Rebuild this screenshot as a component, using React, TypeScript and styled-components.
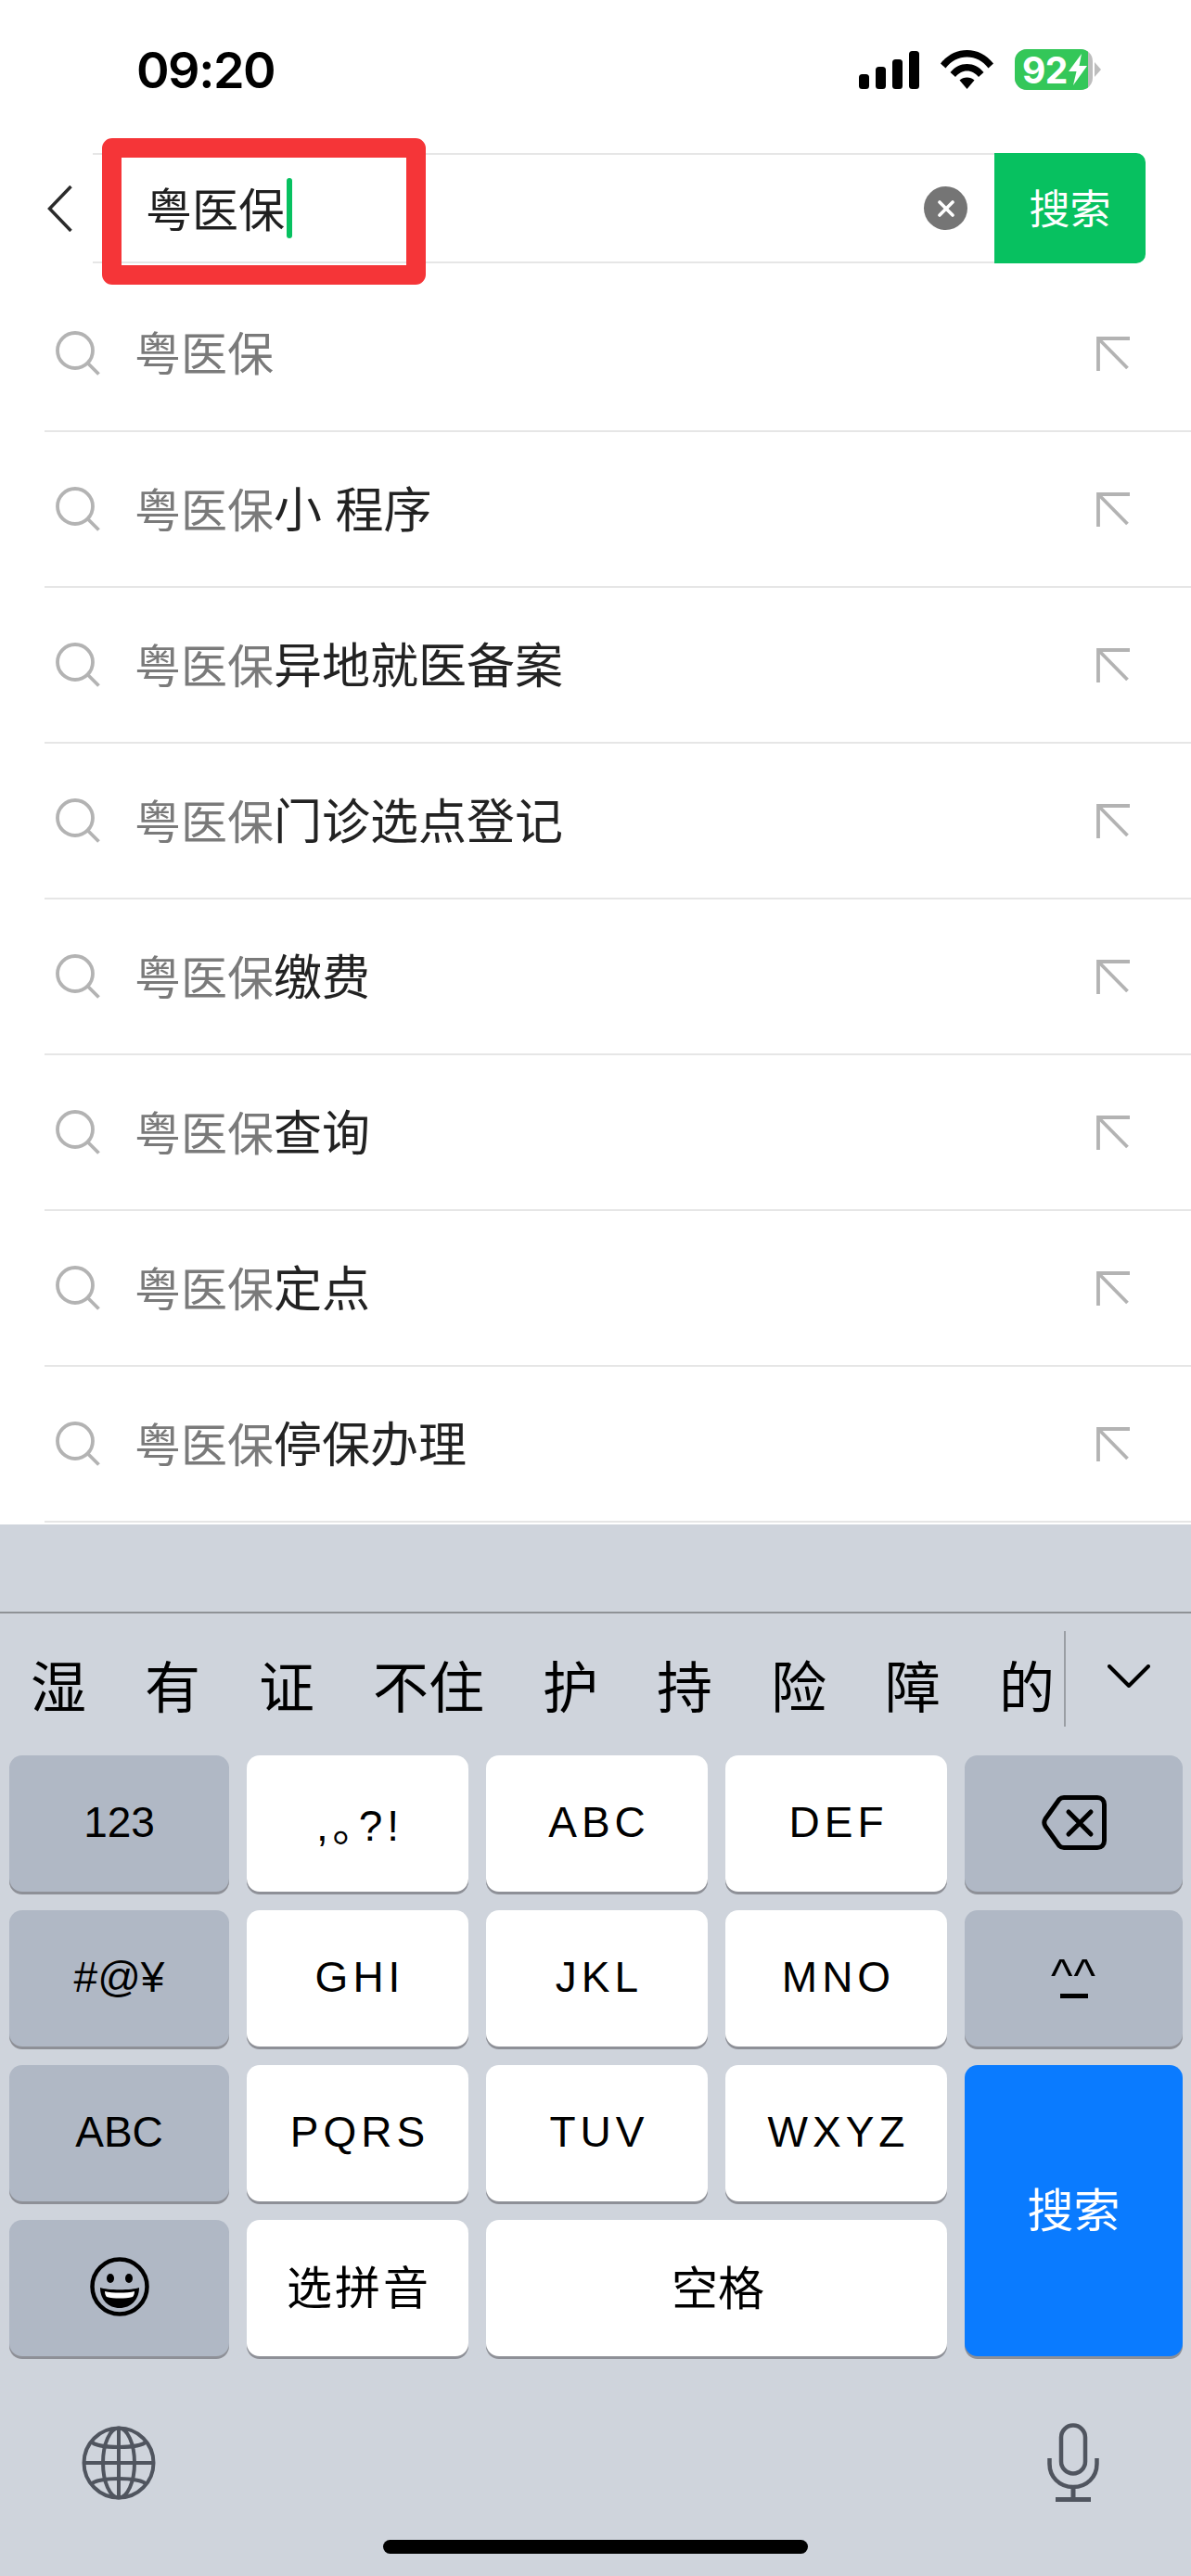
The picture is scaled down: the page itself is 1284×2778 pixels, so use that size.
import React from "react";
import styled, { createGlobalStyle } from "styled-components";

const GlobalStyle = createGlobalStyle`
  html, body {
    margin: 0;
    padding: 0;
    background: #fff;
  }
  body {
    font-family: "Liberation Sans", "Noto Sans CJK SC", sans-serif;
  }
  * {
    box-sizing: border-box;
  }
`;

const HIGHLIGHT = "粤医保";
const suggestions = ["", "小 程序", "异地就医备案", "门诊选点登记", "缴费", "查询", "定点", "停保办理"];
const candidates = ["湿", "有", "证", "不住", "护", "持", "险", "障", "的"];

function SignalIcon() {
  return (
    <svg width="65" height="41" viewBox="0 0 65 41">
      <rect x="0" y="25" width="11" height="16" rx="3.5" fill="#000" />
      <rect x="18" y="17" width="11" height="24" rx="3.5" fill="#000" />
      <rect x="36" y="9" width="11" height="32" rx="3.5" fill="#000" />
      <rect x="54" y="0" width="11" height="41" rx="3.5" fill="#000" />
    </svg>
  );
}

function WifiIcon() {
  return (
    <svg width="57" height="42" viewBox="0 0 57 42" fill="#000">
      <path d="M0 14.5C7.5 5 17.5 0 28.5 0S49.500 5 57 14.500L51.500 19.500C45.500 11.500 37.500 7.500 28.500 7.500S11.500 11.500 5.500 19.500Z" />
      <path d="M10.500 24C15.500 18 21.500 15 28.500 15S41.500 18 46.500 24L41 29C37.500 25 33.500 22.500 28.500 22.500S19.500 25 16 29Z" />
      <path d="M20.500 32.500C22.500 30.500 25.500 29.500 28.500 29.500S34.500 30.500 36.500 32.500L28.500 42Z" />
    </svg>
  );
}

function BoltIcon() {
  return (
    <svg width="22" height="34" viewBox="0 0 22 34" fill="#fff">
      <path d="M15 0L1 19H9.500L6 34L21 13H12.500Z" />
    </svg>
  );
}

function BackIcon() {
  return (
    <svg width="27" height="50" viewBox="0 0 27 50" fill="none" stroke="#2b2b2b" strokeWidth="3.500">
      <path d="M25.500 1L2.500 25L25.500 49" />
    </svg>
  );
}

function ClearIcon() {
  return (
    <svg width="18" height="18" viewBox="0 0 18 18" fill="none" stroke="#fff" strokeWidth="3.600" strokeLinecap="round">
      <path d="M2 2L16 16M16 2L2 16" />
    </svg>
  );
}

function SearchIcon() {
  return (
    <svg width="48" height="48" viewBox="0 0 48 48" fill="none" stroke="#b3b3b3" strokeWidth="3.800">
      <circle cx="21" cy="21" r="19" />
      <path d="M34.500 34.500L46.500 46.500" />
    </svg>
  );
}

function FillIcon() {
  return (
    <svg width="36" height="37" viewBox="0 0 36 37" fill="none" stroke="#b3b3b3" strokeWidth="3.800">
      <path d="M2 37V2H36" />
      <path d="M3 3L33.500 34" />
    </svg>
  );
}

function ChevronDownIcon() {
  return (
    <svg width="46" height="25" viewBox="0 0 46 25" fill="none" stroke="#000" strokeWidth="4" strokeLinecap="round" strokeLinejoin="round">
      <path d="M2 2L23 23L44 2" />
    </svg>
  );
}

function BackspaceIcon() {
  return (
    <svg width="70" height="59" viewBox="0 0 70 59" fill="none" stroke="#000" strokeWidth="5" strokeLinecap="round" strokeLinejoin="round">
      <path d="M24 2.500H60C64.500 2.500 67.500 5.500 67.500 10V49C67.500 53.500 64.500 56.500 60 56.500H24C22 56.500 20.500 56 19 54.500L4 33.500C2.500 31 2.500 28 4 25.500L19 4.500C20.500 3 22 2.500 24 2.500Z" />
      <path d="M29 18L53 42M53 18L29 42" />
    </svg>
  );
}

function EmojiIcon() {
  return (
    <svg width="64" height="64" viewBox="0 0 64 64">
      <circle cx="32" cy="32" r="29.500" fill="none" stroke="#000" strokeWidth="4.500" />
      <ellipse cx="22" cy="23" rx="4" ry="5" fill="#000" />
      <ellipse cx="42" cy="23" rx="4" ry="5" fill="#000" />
      <path d="M11 33C18 36 46 36 53 33C53 46 44 55 32 55S11 46 11 33Z" fill="#000" />
      <path d="M16 37C24 39 40 39 48 37C48 40 47 42 46 43C38 45 26 45 18 43C17 42 16 40 16 37Z" fill="#fff" />
    </svg>
  );
}

function GlobeIcon() {
  return (
    <svg width="80" height="80" viewBox="0 0 80 80" fill="none" stroke="#50555f" strokeWidth="4">
      <circle cx="40" cy="40" r="37.500" />
      <ellipse cx="40" cy="40" rx="17" ry="37.500" />
      <path d="M40 2.500V77.500M2.500 40H77.500" />
      <path d="M10 17C18 25 62 25 70 17M10 63C18 55 62 55 70 63" />
    </svg>
  );
}

function MicIcon() {
  return (
    <svg width="56" height="85" viewBox="0 0 56 85" fill="none" stroke="#50555f" strokeWidth="4.500">
      <rect x="15" y="2.500" width="26" height="52" rx="13" />
      <path d="M2.500 38V44C2.500 58 13 69 28 69S53.500 58 53.500 44V38" />
      <path d="M28 69V82M9 82.500H47" strokeWidth="5" />
    </svg>
  );
}

export default function App() {
  return (
    <Page>
      <GlobalStyle />
      <StatusBar>
        <Clock>09:20</Clock>
        <StatusIcons>
          <SignalIcon />
          <WifiIcon />
          <Battery>
            <BatteryBody>
              <BatteryFill style={{ width: "94%" }} />
              <BatteryLabel>92</BatteryLabel>
              <BatteryBolt>
                <BoltIcon />
              </BatteryBolt>
            </BatteryBody>
            <BatteryCap />
          </Battery>
        </StatusIcons>
      </StatusBar>

      <SearchBar>
        <BackButton>
          <BackIcon />
        </BackButton>
        <SearchField>
          <QueryText>{HIGHLIGHT}</QueryText>
          <Caret />
          <ClearButton>
            <ClearIcon />
          </ClearButton>
          <RedMark />
        </SearchField>
        <SearchButton>
          <span>搜索</span>
        </SearchButton>
      </SearchBar>

      <SuggestionList>
        {suggestions.map((rest) => (
          <SuggestionRow key={rest}>
            <SearchIcon />
            <SuggestionText>
              <Highlight>{HIGHLIGHT}</Highlight>
              {rest}
            </SuggestionText>
            <FillIcon />
          </SuggestionRow>
        ))}
      </SuggestionList>

      <Keyboard>
        <Composition />
        <CandidateBar>
          <CandidateList>
            {candidates.map((c) => (
              <span key={c}>{c}</span>
            ))}
          </CandidateList>
          <MoreButton>
            <ChevronDownIcon />
          </MoreButton>
        </CandidateBar>

        <KeyGrid>
          <Key $tone="dark">123</Key>
          <Key $spaced>,｡?!</Key>
          <Key $spaced>ABC</Key>
          <Key $spaced>DEF</Key>
          <Key $tone="dark">
            <BackspaceIcon />
          </Key>

          <Key $tone="dark">#@¥</Key>
          <Key $spaced>GHI</Key>
          <Key $spaced>JKL</Key>
          <Key $spaced>MNO</Key>
          <Key $tone="dark">
            <Kaomoji>
              <KaomojiEyes>^^</KaomojiEyes>
              <KaomojiMouth />
            </Kaomoji>
          </Key>

          <Key $tone="dark">ABC</Key>
          <Key $spaced>PQRS</Key>
          <Key $spaced>TUV</Key>
          <Key $spaced>WXYZ</Key>
          <EnterKey>搜索</EnterKey>

          <Key $tone="dark">
            <EmojiIcon />
          </Key>
          <CjkKey>选拼音</CjkKey>
          <SpaceKey>空格</SpaceKey>
        </KeyGrid>

        <ToolRow>
          <GlobeIcon />
          <MicIcon />
        </ToolRow>
        <HomeBar />
      </Keyboard>
    </Page>
  );
}

const Page = styled.div`
  width: 1284px;
  height: 2778px;
  display: flex;
  flex-direction: column;
  overflow: hidden;
  background: #fff;
`;

const StatusBar = styled.div`
  height: 150px;
  margin-bottom: 15px;
  padding: 0 97px 0 147px;
  display: flex;
  align-items: center;
  justify-content: space-between;
`;

const Clock = styled.span`
  font-family: Inter, sans-serif;
  font-size: 54px;
  font-weight: 600;
  letter-spacing: -1.5px;
  color: #000;
`;

const StatusIcons = styled.div`
  display: flex;
  align-items: center;
  gap: 23px;
`;

const Battery = styled.div`
  display: flex;
  align-items: center;
  gap: 2px;
`;

const BatteryBody = styled.div`
  position: relative;
  width: 84px;
  height: 44px;
  border-radius: 13px;
  overflow: hidden;
  background: #bdbdbd;
  display: flex;
  align-items: center;
  padding-left: 8px;
`;

const BatteryFill = styled.div`
  position: absolute;
  left: 0;
  top: 0;
  bottom: 0;
  background: #34c759;
`;

const BatteryLabel = styled.span`
  position: relative;
  font-family: Inter, sans-serif;
  font-size: 39px;
  font-weight: 700;
  letter-spacing: -0.5px;
  color: #fff;
`;

const BatteryBolt = styled.span`
  position: relative;
  display: flex;
  flex-shrink: 0;
`;

const BatteryCap = styled.div`
  width: 0;
  height: 0;
  border-top: 8px solid transparent;
  border-bottom: 8px solid transparent;
  border-left: 7px solid #bdbdbd;
`;

const SearchBar = styled.div`
  height: 119px;
  margin-bottom: 14px;
  padding: 0 49px 0 51px;
  display: flex;
  align-items: stretch;
`;

const BackButton = styled.div`
  width: 49px;
  display: flex;
  align-items: center;
`;

const SearchField = styled.div`
  position: relative;
  flex: 1;
  display: flex;
  align-items: center;
  padding-left: 57px;
  border-top: 2px solid #e6e6e6;
  border-bottom: 2px solid #e6e6e6;
`;

const QueryText = styled.span`
  margin-bottom: 3px;
  font-size: 50px;
  color: #1f1f1f;
`;

const Caret = styled.span`
  width: 6px;
  height: 65px;
  margin-left: 2px;
  border-radius: 3px;
  background: #07c160;
`;

const ClearButton = styled.div`
  width: 47px;
  height: 47px;
  margin-left: auto;
  margin-right: 29px;
  border-radius: 50%;
  background: #757575;
  display: flex;
  align-items: center;
  justify-content: center;
`;

const RedMark = styled.div`
  position: absolute;
  left: 10px;
  top: -18px;
  width: 349px;
  height: 158px;
  border: 21px solid #f53538;
  border-radius: 11px;
  pointer-events: none;
`;

const SearchButton = styled.div`
  width: 163px;
  padding-bottom: 4px;
  border-radius: 0 10px 10px 0;
  background: #07c160;
  color: #fff;
  font-size: 44px;
  display: flex;
  align-items: center;
  justify-content: center;
`;

const SuggestionList = styled.div`
  display: flex;
  flex-direction: column;
  margin-left: 48px;
`;

const SuggestionRow = styled.div`
  height: 168px;
  padding: 0 66px 0 12px;
  display: flex;
  align-items: center;
  gap: 37px;
  border-bottom: 2px solid #e6e6e6;
`;

const SuggestionText = styled.span`
  flex: 1;
  margin-bottom: 6px;
  font-size: 52px;
  color: #222;
`;

const Highlight = styled.span`
  font-size: 50px;
  color: #7a7a7a;
`;

const Keyboard = styled.div`
  flex: 1;
  margin-top: 2px;
  display: flex;
  flex-direction: column;
  background: #cfd4dc;
`;

const Composition = styled.div`
  height: 96px;
  border-bottom: 2px solid #8f9296;
`;

const CandidateBar = styled.div`
  height: 153px;
  padding-top: 19px;
  display: flex;
  align-items: flex-start;
`;

const CandidateList = styled.div`
  width: 1147px;
  padding: 11px 0 0 33px;
  display: flex;
  gap: 63px;
  font-size: 60px;
  line-height: 103px;
  color: #000;
  white-space: nowrap;
`;

const MoreButton = styled.div`
  width: 137px;
  height: 103px;
  padding-bottom: 6px;
  border-left: 2px solid #9a9ea4;
  display: flex;
  align-items: center;
  justify-content: center;
`;

const KeyGrid = styled.div`
  padding-left: 10px;
  display: grid;
  grid-template-columns: 237px 239px 239px 239px 235px;
  grid-auto-rows: 147px;
  column-gap: 19px;
  row-gap: 20px;
`;

const Key = styled.div<{ $tone?: "light" | "dark"; $spaced?: boolean }>`
  padding-bottom: 3px;
  padding-left: ${(p) => (p.$spaced ? "5px" : "0")};
  border-radius: 14px;
  background: ${(p) => (p.$tone === "dark" ? "#b0b8c5" : "#fff")};
  box-shadow: 0 3px 0 #8e9097;
  color: #000;
  font-size: 46px;
  letter-spacing: ${(p) => (p.$spaced ? "5px" : "0")};
  display: flex;
  align-items: center;
  justify-content: center;
`;

const CjkKey = styled(Key)`
  padding-bottom: 8px;
  padding-left: 3px;
  font-size: 49px;
  letter-spacing: 3px;
`;

const EnterKey = styled(Key)`
  grid-column: 5;
  grid-row: 3 / span 2;
  padding-bottom: 8px;
  background: #0a7bff;
  color: #fff;
  font-size: 50px;
`;

const SpaceKey = styled(Key)`
  grid-column: 3 / span 2;
  padding-bottom: 8px;
  padding-left: 3px;
  font-size: 50px;
`;

const Kaomoji = styled.span`
  display: flex;
  flex-direction: column;
  align-items: center;
`;

const KaomojiEyes = styled.span`
  font-size: 50px;
  line-height: 40px;
  letter-spacing: 1px;
`;

const KaomojiMouth = styled.span`
  width: 30px;
  height: 5px;
  background: #000;
`;

const ToolRow = styled.div`
  height: 85px;
  margin-top: 72px;
  padding: 0 99px 0 88px;
  display: flex;
  align-items: center;
  justify-content: space-between;
`;

const HomeBar = styled.div`
  width: 458px;
  height: 15px;
  margin: 41px auto 0;
  border-radius: 8px;
  background: #000;
`;
